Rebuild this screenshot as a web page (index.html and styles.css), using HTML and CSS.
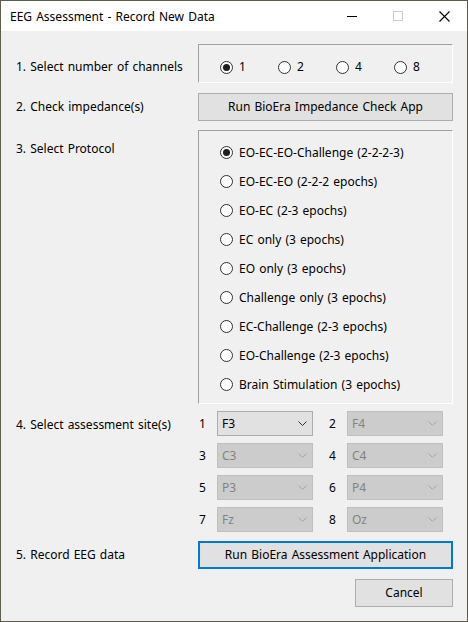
FILE: index.html
```html
<!DOCTYPE html>
<html>
<head>
<meta charset="utf-8">
<link rel="stylesheet" href="styles.css">
</head>
<body>
<div class="window">
  <div class="titlebar">
    <span class="title">EEG Assessment - Record New Data</span>
    <div class="caption">
      <span class="cap-btn"><svg width="10" height="10" viewBox="0 0 10 10"><path d="M0 5.5H10" stroke="#000" stroke-width="1"/></svg></span>
      <span class="cap-btn"><svg width="10" height="10" viewBox="0 0 10 10"><rect x="0.5" y="0.5" width="9" height="9" fill="none" stroke="#cccccc" stroke-width="1"/></svg></span>
      <span class="cap-btn"><svg width="11" height="11" viewBox="0 0 11 11"><path d="M0.5 0.5L10.5 10.5M10.5 0.5L0.5 10.5" stroke="#000" stroke-width="1.1"/></svg></span>
    </div>
  </div>
  <div class="client">
    <div class="row row-channels">
      <div class="label">1. Select number of channels</div>
      <div class="groupbox channels">
        <span class="radio checked"><span class="circle"></span>1</span>
        <span class="radio"><span class="circle"></span>2</span>
        <span class="radio"><span class="circle"></span>4</span>
        <span class="radio"><span class="circle"></span>8</span>
      </div>
    </div>
    <div class="row row-imp">
      <div class="label">2. Check impedance(s)</div>
      <div class="button wide">Run BioEra Impedance Check App</div>
    </div>
    <div class="row row-protocol">
      <div class="label">3. Select Protocol</div>
      <div class="groupbox protocol">
        <span class="radio checked"><span class="circle"></span>EO-EC-EO-Challenge (2-2-2-3)</span>
        <span class="radio"><span class="circle"></span>EO-EC-EO (2-2-2 epochs)</span>
        <span class="radio"><span class="circle"></span>EO-EC (2-3 epochs)</span>
        <span class="radio"><span class="circle"></span>EC only (3 epochs)</span>
        <span class="radio"><span class="circle"></span>EO only (3 epochs)</span>
        <span class="radio"><span class="circle"></span>Challenge only (3 epochs)</span>
        <span class="radio"><span class="circle"></span>EC-Challenge (2-3 epochs)</span>
        <span class="radio"><span class="circle"></span>EO-Challenge (2-3 epochs)</span>
        <span class="radio"><span class="circle"></span>Brain Stimulation (3 epochs)</span>
      </div>
    </div>
    <div class="row row-sites">
      <div class="label">4. Select assessment site(s)</div>
      <div class="sites">
        <span class="num">1</span>
        <div class="combo"><span>F3</span><svg width="9" height="5" viewBox="0 0 9 5"><path d="M0.5 0.5L4.5 4.5L8.5 0.5" fill="none" stroke="#333" stroke-width="1"/></svg></div>
        <span class="num n2">2</span>
        <div class="combo disabled"><span>F4</span><svg width="9" height="5" viewBox="0 0 9 5"><path d="M0.5 0.5L4.5 4.5L8.5 0.5" fill="none" stroke="#a6a6a6" stroke-width="1"/></svg></div>
        <span class="num">3</span>
        <div class="combo disabled"><span>C3</span><svg width="9" height="5" viewBox="0 0 9 5"><path d="M0.5 0.5L4.5 4.5L8.5 0.5" fill="none" stroke="#a6a6a6" stroke-width="1"/></svg></div>
        <span class="num n2">4</span>
        <div class="combo disabled"><span>C4</span><svg width="9" height="5" viewBox="0 0 9 5"><path d="M0.5 0.5L4.5 4.5L8.5 0.5" fill="none" stroke="#a6a6a6" stroke-width="1"/></svg></div>
        <span class="num">5</span>
        <div class="combo disabled"><span>P3</span><svg width="9" height="5" viewBox="0 0 9 5"><path d="M0.5 0.5L4.5 4.5L8.5 0.5" fill="none" stroke="#a6a6a6" stroke-width="1"/></svg></div>
        <span class="num n2">6</span>
        <div class="combo disabled"><span>P4</span><svg width="9" height="5" viewBox="0 0 9 5"><path d="M0.5 0.5L4.5 4.5L8.5 0.5" fill="none" stroke="#a6a6a6" stroke-width="1"/></svg></div>
        <span class="num">7</span>
        <div class="combo disabled"><span>Fz</span><svg width="9" height="5" viewBox="0 0 9 5"><path d="M0.5 0.5L4.5 4.5L8.5 0.5" fill="none" stroke="#a6a6a6" stroke-width="1"/></svg></div>
        <span class="num n2">8</span>
        <div class="combo disabled"><span>Oz</span><svg width="9" height="5" viewBox="0 0 9 5"><path d="M0.5 0.5L4.5 4.5L8.5 0.5" fill="none" stroke="#a6a6a6" stroke-width="1"/></svg></div>
      </div>
    </div>
    <div class="row row-record">
      <div class="label">5. Record EEG data</div>
      <div class="button wide default">Run BioEra Assessment Application</div>
    </div>
    <div class="row-cancel">
      <div class="button cancel">Cancel</div>
    </div>
  </div>
</div>
</body>
</html>
```

FILE: styles.css
```css
* { box-sizing: border-box; }
html, body { margin: 0; padding: 0; }
body {
  font-family: "Noto Sans", "Open Sans", sans-serif;
  font-size: 12px;
  word-spacing: 1px;
  color: #000;
  background: #3a3a2a;
}
.window {
  width: 468px;
  height: 622px;
  border: 1px solid #5f5d4c;
  background: #f0f0f0;
  display: flex;
  flex-direction: column;
}
.titlebar {
  height: 30px;
  background: #fff;
  display: flex;
  align-items: center;
  justify-content: space-between;
}
.title {
  padding-left: 9px;
  font-size: 12px;
  line-height: 16px;
  padding-top: 1px;
}
.caption { display: flex; height: 30px; }
.cap-btn {
  width: 46px;
  height: 30px;
  display: flex;
  align-items: center;
  justify-content: center;
}
.client {
  flex: 1;
  padding-left: 15px;
  padding-right: 13px;
}
.row { display: flex; }
.label {
  width: 182px;
  flex: none;
  line-height: 16px;
}
.row-channels { margin-top: 13px; }
.row-channels .label { padding-top: 15px; }
.groupbox {
  width: 255px;
  border: 1px solid;
  border-color: #a0a0a0 #ffffff #ffffff #a0a0a0;
}
.channels {
  height: 39px;
  padding: 14px 0 0 21px;
  display: flex;
}
.channels .radio { width: 60px; }
.radio {
  display: flex;
  align-items: center;
  line-height: 16px;
  height: 16px;
  white-space: nowrap;
}
.circle {
  width: 13px;
  height: 13px;
  border: 1px solid #333;
  border-radius: 50%;
  background: #fff;
  margin-right: 6px;
  flex: none;
  display: flex;
  align-items: center;
  justify-content: center;
}
.radio.checked .circle::after {
  content: "";
  width: 7px;
  height: 7px;
  border-radius: 50%;
  background: #1f1f1f;
}
.row-imp { margin-top: 10px; align-items: center; }
.button {
  height: 28px;
  background: #e1e1e1;
  border: 1px solid #adadad;
  display: flex;
  align-items: center;
  justify-content: center;
  line-height: 16px;
  white-space: nowrap;
}
.button.wide { width: 255px; }
.button.default { border: 2px solid #0078d7; }
.row-protocol { margin-top: 9px; }
.row-protocol .label { padding-top: 11px; }
.protocol {
  height: 274px;
  padding: 7px 0 0 21px;
  display: flex;
  flex-direction: column;
}
.protocol .radio { height: 29px; }
.row-sites { margin-top: 7px; }
.row-sites .label { padding-top: 6px; }
.sites {
  display: grid;
  grid-template-columns: 19px 96px 34px 96px;
  grid-auto-rows: 25px;
  row-gap: 7px;
}
.num {
  padding-left: 1px;
  line-height: 25px;
}
.num.n2 { padding-left: 16px; }
.combo {
  border: 1px solid #adadad;
  background: #e1e1e1;
  display: flex;
  align-items: center;
  justify-content: space-between;
  padding: 0 5px 0 4px;
  line-height: 16px;
}
.combo svg { flex: none; }
.combo.disabled {
  background: #cccccc;
  border-color: #bfbfbf;
  color: #838383;
}
.row-record { margin-top: 9px; align-items: center; }
.row-cancel {
  margin-top: 10px;
  display: flex;
  justify-content: flex-end;
  padding-right: 1px;
}
.button.cancel { width: 98px; }
```
